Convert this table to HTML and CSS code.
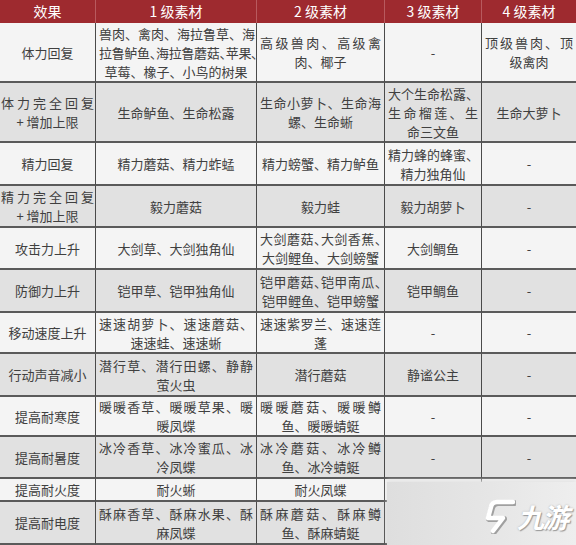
FILE: index.html
```html
<!DOCTYPE html>
<html lang="zh-CN">
<head>
<meta charset="utf-8">
<title>料理素材表</title>
<link rel="stylesheet" href="styles.css">
</head>
<body>
<div class="page">
  <div class="table">
    <div class="row head">
      <div class="h">效果</div>
      <div class="h">1 级素材</div>
      <div class="h">2 级素材</div>
      <div class="h">3 级素材</div>
      <div class="h last">4 级素材</div>
    </div>

    <div class="row a">
      <div class="c">体力回复</div>
      <div class="c"><span class="j">兽肉、禽肉、海拉鲁草、海</span><span class="j k">拉鲁鲈鱼、海拉鲁蘑菇、苹果、</span><span>草莓、橡子、小鸟的树果</span></div>
      <div class="c"><span class="j">高级兽肉、高级禽</span><span>肉、椰子</span></div>
      <div class="c">-</div>
      <div class="c last"><span class="j">顶级兽肉、顶</span><span>级禽肉</span></div>
    </div>

    <div class="row b">
      <div class="c tight"><span class="j">体力完全回复</span><span>+ 增加上限</span></div>
      <div class="c">生命鲈鱼、生命松露</div>
      <div class="c"><span class="j">生命小萝卜、生命海</span><span>螺、生命蜥</span></div>
      <div class="c"><span class="j">大个生命松露、</span><span class="j">生命榴莲、生</span><span>命三文鱼</span></div>
      <div class="c last">生命大萝卜</div>
    </div>

    <div class="row a">
      <div class="c">精力回复</div>
      <div class="c">精力蘑菇、精力蚱蜢</div>
      <div class="c">精力螃蟹、精力鲈鱼</div>
      <div class="c"><span class="j">精力蜂的蜂蜜、</span><span>精力独角仙</span></div>
      <div class="c last">-</div>
    </div>

    <div class="row b">
      <div class="c tight"><span class="j">精力完全回复</span><span>+ 增加上限</span></div>
      <div class="c">毅力蘑菇</div>
      <div class="c">毅力蛙</div>
      <div class="c">毅力胡萝卜</div>
      <div class="c last">-</div>
    </div>

    <div class="row a">
      <div class="c">攻击力上升</div>
      <div class="c">大剑草、大剑独角仙</div>
      <div class="c"><span class="j k">大剑蘑菇、大剑香蕉、</span><span>大剑鲤鱼、大剑螃蟹</span></div>
      <div class="c">大剑鲷鱼</div>
      <div class="c last">-</div>
    </div>

    <div class="row b">
      <div class="c">防御力上升</div>
      <div class="c">铠甲草、铠甲独角仙</div>
      <div class="c"><span class="j k">铠甲蘑菇、铠甲南瓜、</span><span>铠甲鲤鱼、铠甲螃蟹</span></div>
      <div class="c">铠甲鲷鱼</div>
      <div class="c last">-</div>
    </div>

    <div class="row a">
      <div class="c">移动速度上升</div>
      <div class="c"><span class="j">速速胡萝卜、速速蘑菇、</span><span>速速蛙、速速蜥</span></div>
      <div class="c"><span class="j">速速紫罗兰、速速莲</span><span>蓬</span></div>
      <div class="c">-</div>
      <div class="c last">-</div>
    </div>

    <div class="row b">
      <div class="c">行动声音减小</div>
      <div class="c"><span class="j">潜行草、潜行田螺、静静</span><span>萤火虫</span></div>
      <div class="c">潜行蘑菇</div>
      <div class="c">静谧公主</div>
      <div class="c last">-</div>
    </div>

    <div class="row a">
      <div class="c">提高耐寒度</div>
      <div class="c"><span class="j">暖暖香草、暖暖草果、暖</span><span>暖凤蝶</span></div>
      <div class="c"><span class="j">暖暖蘑菇、暖暖鳟</span><span>鱼、暖暖蜻蜓</span></div>
      <div class="c">-</div>
      <div class="c last">-</div>
    </div>

    <div class="row b">
      <div class="c">提高耐暑度</div>
      <div class="c"><span class="j">冰冷香草、冰冷蜜瓜、冰</span><span>冷凤蝶</span></div>
      <div class="c"><span class="j">冰冷蘑菇、冰冷鳟</span><span>鱼、冰冷蜻蜓</span></div>
      <div class="c">-</div>
      <div class="c last">-</div>
    </div>

    <div class="row a">
      <div class="c">提高耐火度</div>
      <div class="c">耐火蜥</div>
      <div class="c">耐火凤蝶</div>
      <div class="c"></div>
      <div class="c last"></div>
    </div>

    <div class="row b">
      <div class="c">提高耐电度</div>
      <div class="c"><span class="j">酥麻香草、酥麻水果、酥</span><span>麻凤蝶</span></div>
      <div class="c"><span class="j">酥麻蘑菇、酥麻鳟</span><span>鱼、酥麻蜻蜓</span></div>
      <div class="c"></div>
      <div class="c last"></div>
    </div>
  </div>

  <div class="watermark">
    <svg class="wm-icon" width="32" height="36" viewBox="0 0 32 36">
      <path d="M29 4 L13 4 Q8 4 7 9 L4 20 L19 20 L9 33" fill="none" stroke="#a0a0a0" stroke-width="6" stroke-linejoin="round" stroke-linecap="round" transform="translate(1 1)"/>
      <path d="M29 4 L13 4 Q8 4 7 9 L4 20 L19 20 L9 33" fill="none" stroke="#ffffff" stroke-width="4.5" stroke-linejoin="round" stroke-linecap="round"/>
    </svg>
    <span class="wm-text">九游</span>
  </div>
</div>
</body>
</html>
```

FILE: styles.css
```css
* {
  box-sizing: border-box;
}

html, body {
  margin: 0;
  padding: 0;
  background: #ffffff;
}

.page {
  position: relative;
  width: 576px;
  height: 545px;
  overflow: hidden;
  font-family: "Noto Sans CJK SC", "Noto Sans", sans-serif;
  color: #404040;
}

.table {
  display: grid;
  grid-template-columns: 96px 161px 128px 97px 94px;
  grid-template-rows: 23px 60px 60px 43px 42px 42px 43px 41px 43px 40px 42px 23px 43px;
}

.row {
  display: contents;
}

.h {
  background: #9e2a2f;
  color: #ffffff;
  font-size: 14px;
  display: flex;
  align-items: center;
  justify-content: center;
  border-right: 1px solid #b85a5e;
  line-height: 1;
  padding-bottom: 1px;
}

.h.last {
  border-right: none;
}

.c {
  display: flex;
  flex-direction: column;
  justify-content: center;
  text-align: center;
  font-size: 13px;
  line-height: 19px;
  padding: 0 3px;
  border-right: 1px solid #4a4a4a;
  border-bottom: 2px solid #5a5a5a;
  white-space: nowrap;
}

.c.last {
  border-right: none;
}

.c.tight {
  padding: 0 1px;
}

.a > .c {
  background: #f4f4f4;
}

.b > .c {
  background: #e1e1e1;
}

.c > span {
  display: block;
}

.c > .j {
  text-align: justify;
  text-align-last: justify;
}

.c > .k {
  font-feature-settings: "halt";
  letter-spacing: -0.3px;
}

.watermark {
  position: absolute;
  left: 387px;
  top: 482px;
  width: 189px;
  height: 63px;
  background: linear-gradient(to right, #dedede, #e6e6e6 55%, #eeeeee);
  box-shadow: 0 -2px 4px rgba(225, 225, 225, 0.9);
  display: flex;
  align-items: center;
  padding-left: 97px;
  gap: 1px;
  white-space: nowrap;
}

.wm-icon {
  flex: none;
  margin-top: 4px;
}

.wm-text {
  flex: none;
  font-size: 27px;
  line-height: 1;
  font-style: italic;
  font-weight: bold;
  color: #ffffff;
  letter-spacing: -2px;
  text-shadow: 1px 1px 1px #9a9a9a, 0 0 2px #b0b0b0;
  margin-top: 6px;
}
```
